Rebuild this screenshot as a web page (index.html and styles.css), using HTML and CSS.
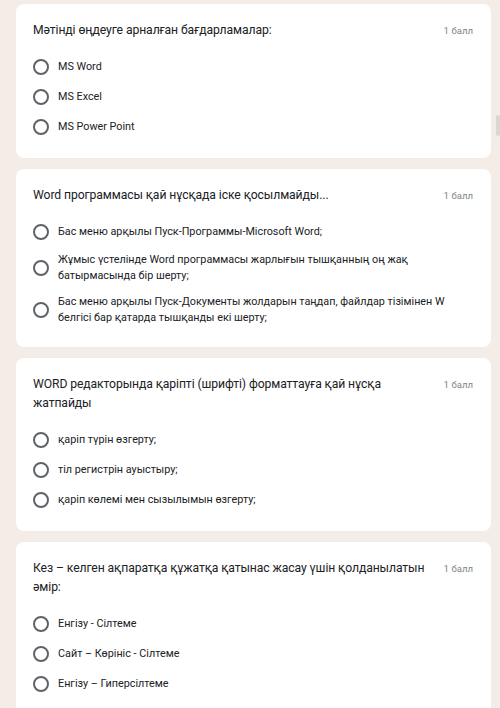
FILE: index.html
```html
<!DOCTYPE html>
<html lang="kk">
<head>
    <meta charset="UTF-8">
    <meta name="viewport" content="width=device-width, initial-scale=1.0">
    <title>Тест</title>
    <link rel="stylesheet" href="styles.css">
</head>
<body>

<!-- Question 1 -->
<div class="card">
    <div class="question-head">
        <div class="question-title">Мәтінді өңдеуге арналған бағдарламалар:</div>
        <div class="points">1 балл</div>
    </div>
    <div class="options">
        <label class="option"><span class="radio"></span><span class="option-text">MS Word</span></label>
        <label class="option"><span class="radio"></span><span class="option-text">MS Excel</span></label>
        <label class="option"><span class="radio"></span><span class="option-text">MS Power Point</span></label>
    </div>
</div>

<!-- Question 2 -->
<div class="card">
    <div class="question-head">
        <div class="question-title">Word программасы қай нұсқада іске қосылмайды...</div>
        <div class="points">1 балл</div>
    </div>
    <div class="options">
        <label class="option"><span class="radio"></span><span class="option-text">Бас меню арқылы Пуск-Программы-Microsoft Word;</span></label>
        <label class="option"><span class="radio"></span><span class="option-text">Жұмыс үстелінде Word программасы жарлығын тышқанның оң жақ батырмасында бір шерту;</span></label>
        <label class="option"><span class="radio"></span><span class="option-text">Бас меню арқылы Пуск-Документы жолдарын таңдап, файлдар тізімінен W белгісі бар қатарда тышқанды екі шерту;</span></label>
    </div>
</div>

<!-- Question 3 -->
<div class="card">
    <div class="question-head">
        <div class="question-title">WORD редакторында қаріпті (шрифті) форматтауға қай нұсқа<br>жатпайды</div>
        <div class="points">1 балл</div>
    </div>
    <div class="options">
        <label class="option"><span class="radio"></span><span class="option-text">қаріп түрін өзгерту;</span></label>
        <label class="option"><span class="radio"></span><span class="option-text">тіл регистрін ауыстыру;</span></label>
        <label class="option"><span class="radio"></span><span class="option-text">қаріп көлемі мен сызылымын өзгерту;</span></label>
    </div>
</div>

<!-- Question 4 -->
<div class="card">
    <div class="question-head">
        <div class="question-title">Кез – келген ақпаратқа құжатқа қатынас жасау үшін қолданылатын әмір:</div>
        <div class="points">1 балл</div>
    </div>
    <div class="options">
        <label class="option"><span class="radio"></span><span class="option-text">Енгізу - Сілтеме</span></label>
        <label class="option"><span class="radio"></span><span class="option-text">Сайт – Көрініс - Сілтеме</span></label>
        <label class="option"><span class="radio"></span><span class="option-text">Енгізу – Гиперсілтеме</span></label>
    </div>
</div>

<div class="scroll-thumb"></div>

</body>
</html>
```

FILE: styles.css
```css
* {
    box-sizing: border-box;
}
body {
    margin: 0;
    padding: 4px 9px 0 16px;
    background-color: #f4ece7;
    font-family: Roboto, "Liberation Sans", sans-serif;
    color: #202124;
}
.card {
    background-color: #fff;
    border-radius: 8px;
    padding: 17px 18px 21px 17px;
    margin-bottom: 11px;
}
.question-head {
    display: flex;
    align-items: flex-start;
}
.question-title {
    flex: 1;
    font-size: 12.2px;
    line-height: 19px;
    letter-spacing: -0.1px;
}
.points {
    font-size: 9.6px;
    line-height: 19px;
    color: #80868b;
    white-space: nowrap;
    margin-left: 1px;
}
.options {
    display: flex;
    flex-direction: column;
    gap: 10px;
    margin-top: 17px;
    padding-right: 6px;
}
.option {
    display: flex;
    align-items: center;
    min-height: 20px;
}
.radio {
    flex: none;
    width: 16px;
    height: 16px;
    border: 2px solid #5f6368;
    border-radius: 50%;
    margin-right: 9px;
}
.option-text {
    font-size: 10.8px;
    line-height: 16px;
}
.scroll-thumb {
    position: fixed;
    right: 0;
    top: 115px;
    width: 4px;
    height: 21px;
    background-color: #dcd6d3;
    border-radius: 2px;
}
```
